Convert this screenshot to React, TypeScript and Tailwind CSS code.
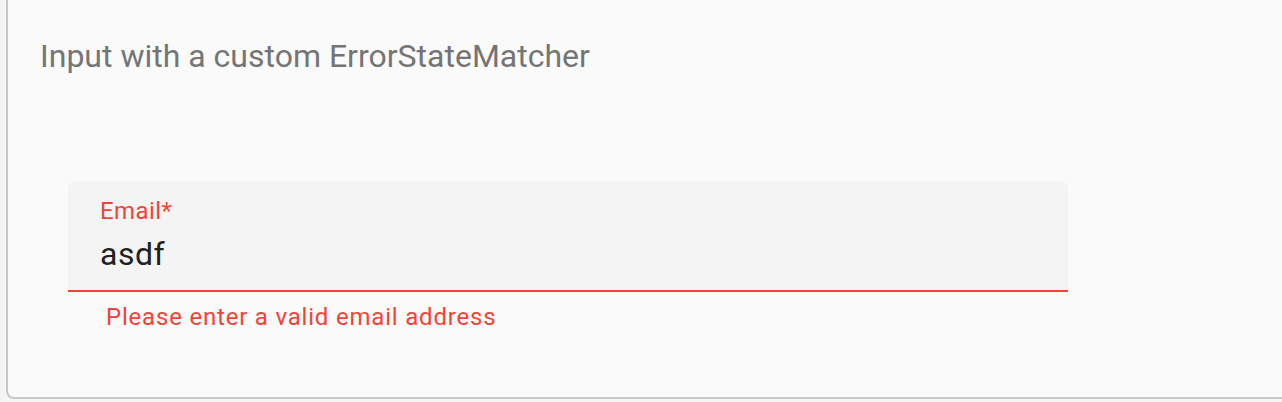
import React from 'react';

const App = () => {
  return (
    <div className="min-h-[402px] w-[1282px] overflow-hidden bg-[#f4f4f4]" style={{ fontFamily: 'Roboto, "Noto Sans", sans-serif' }}>
      <div className="ml-[6px] h-[399px] w-[1300px] rounded-bl-[8px] border-b-2 border-l-2 border-[#c8c8c8] bg-[#fafafa]">
        <h2 className="pl-[32px] pt-[40px] text-[32px] font-normal leading-[32px] text-[#757575]">
          Input with a custom ErrorStateMatcher
        </h2>

        <div className="ml-[60px] mt-[109px] w-[1000px]">
          <div className="rounded-t-[8px] border-b-2 border-[#f44336] bg-[#f4f4f4] px-[32px] pt-[18px] pb-[20px]">
            <label className="block text-[24px] leading-[24px] tracking-[0.4px] text-[#f44336]">Email*</label>
            <div className="mt-[15px] text-[32px] leading-[32px] tracking-[0.5px] text-[#212121]">asdf</div>
          </div>
          <p className="mt-[13px] pl-[38px] text-[24px] leading-[24px] tracking-[0.8px] text-[#f44336]">
            Please enter a valid email address
          </p>
        </div>
      </div>
    </div>
  );
};

export default App;
